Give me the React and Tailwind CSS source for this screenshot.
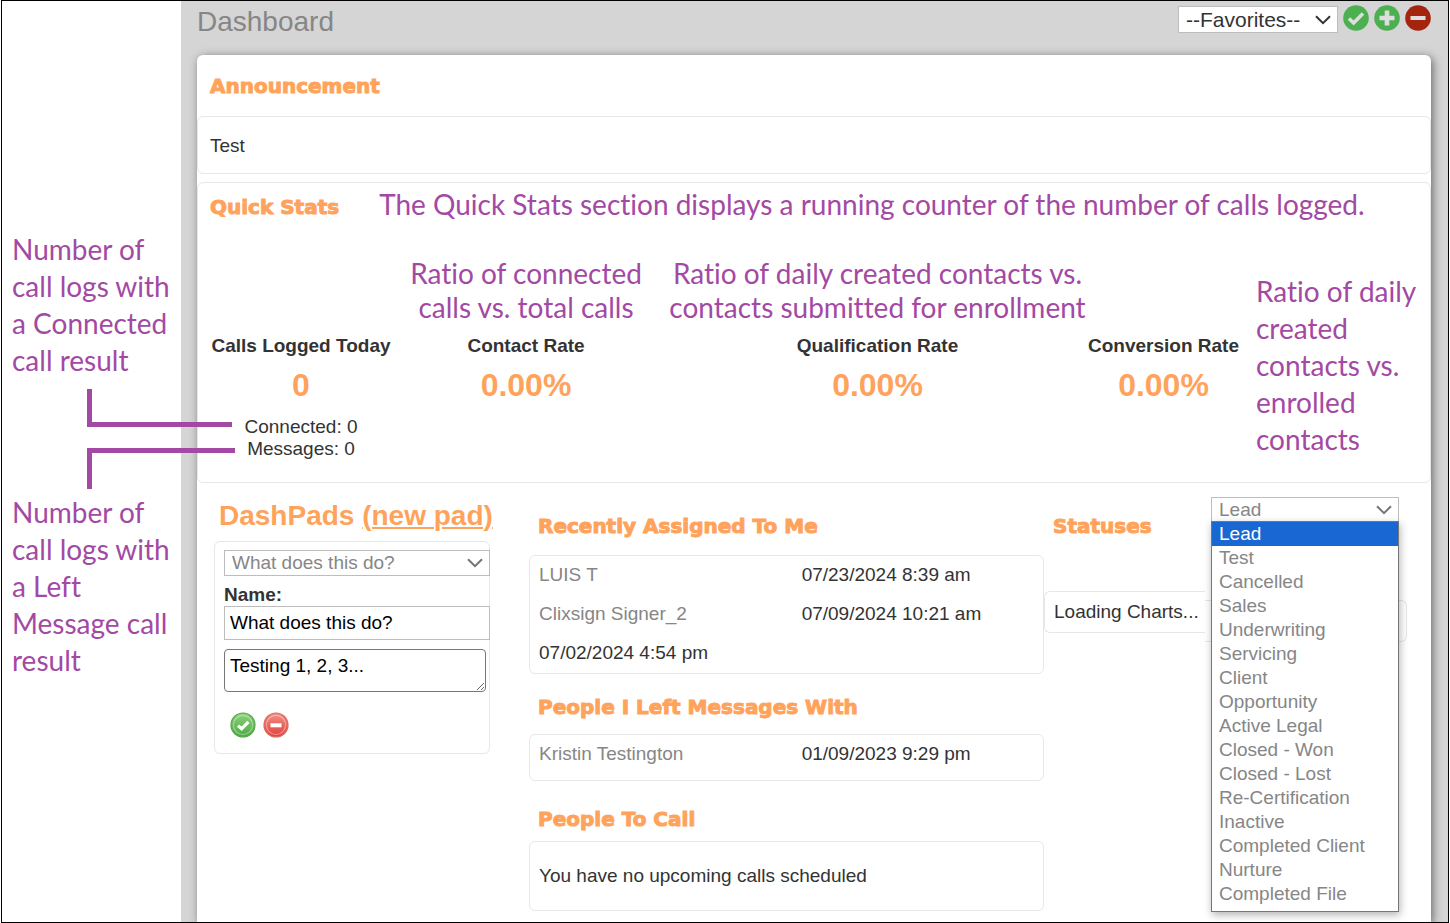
import React from "react";

const statuses = [
  "Lead",
  "Test",
  "Cancelled",
  "Sales",
  "Underwriting",
  "Servicing",
  "Client",
  "Opportunity",
  "Active Legal",
  "Closed - Won",
  "Closed - Lost",
  "Re-Certification",
  "Inactive",
  "Completed Client",
  "Nurture",
  "Completed File",
];

const note = "font-[Lato,sans-serif] text-[28px] text-[#a349a4] [font-variant-ligatures:none]";
const card = "rounded-md border border-[#e7e7e7]";

function Heading({ children }) {
  return (
    <h2 className="whitespace-nowrap font-['DejaVu_Sans',sans-serif] text-[20px] leading-6 font-bold text-[#ffa35c] [-webkit-text-stroke:1px_#ffa35c]">
      {children}
    </h2>
  );
}

function Select({ label, options, boxClass, textClass, chevronClass }) {
  return (
    <div className={`relative ${boxClass}`}>
      <select
        aria-label={label}
        className={`block h-full w-full appearance-none rounded-none border border-[#bdbdbd] bg-white pr-8 pl-[7px] ${textClass}`}
      >
        {options.map((o) => (
          <option key={o}>{o}</option>
        ))}
      </select>
      <svg
        viewBox="0 0 16 10"
        className={`pointer-events-none absolute top-1/2 right-[7px] h-[10px] w-4 -translate-y-1/2 ${chevronClass}`}
        fill="none"
        stroke="currentColor"
        strokeWidth="2"
      >
        <path d="M1 1.2l7 7 7-7" />
      </svg>
    </div>
  );
}

function FlatIcon({ label, fill, d, width }) {
  return (
    <button type="button" aria-label={label} className="size-[26px]">
      <svg viewBox="0 0 26 26" className="size-full">
        <circle cx="13" cy="13" r="12.8" fill={fill} />
        <path d={d} fill="none" stroke="#dedede" strokeWidth={width} />
      </svg>
    </button>
  );
}

function GlossIcon({ label, id, light, dark, rim, d, width }) {
  return (
    <button type="button" aria-label={label} className="size-[26px]">
      <svg viewBox="0 0 26 26" className="size-full">
        <defs>
          <linearGradient id={id} x1="0" y1="0" x2="0" y2="1">
            <stop offset="0" stopColor={light} />
            <stop offset="1" stopColor={dark} />
          </linearGradient>
        </defs>
        <circle cx="13" cy="13" r="12" fill={`url(#${id})`} stroke={rim} strokeWidth="1.2" />
        <circle cx="13" cy="13" r="9.6" fill="none" stroke="#fff" strokeOpacity="0.35" strokeWidth="1.2" />
        <path d={d} fill="none" stroke="#fff" strokeWidth={width} />
      </svg>
    </button>
  );
}

function Stat({ label, value, className = "", children }) {
  return (
    <div className={`pt-[11px] text-center whitespace-nowrap ${className}`}>
      <h3 className="leading-[22px] font-bold">{label}</h3>
      <p className="mt-[9px] mb-3 text-[32px] leading-[38px] font-bold text-[#ffa35c]">{value}</p>
      {children}
    </div>
  );
}

function PeopleTable({ rows, className = "" }) {
  return (
    <div className={`${card} ${className}`}>
      <table className="w-full table-fixed text-left">
        <colgroup>
          <col className="w-[51%]" />
          <col />
        </colgroup>
        <tbody>
          {rows.map(([name, date]) => (
            <tr key={name} className="h-[39px]">
              <td className="pl-[9px]">
                {date ? (
                  <a href="#contact" className="text-[#868686]">
                    {name}
                  </a>
                ) : (
                  name
                )}
              </td>
              <td className="pl-2.5">{date}</td>
            </tr>
          ))}
        </tbody>
      </table>
    </div>
  );
}

function SideNotes() {
  return (
    <aside className={`relative w-[179px] shrink-0 bg-white pt-[230px] pr-1 pl-2.5 leading-[37px] ${note}`}>
      <p>
        Number of
        <br />
        call logs with
        <br />a Connected
        <br />
        call result
      </p>
      <p className="mt-[115px]">
        Number of
        <br />
        call logs with
        <br />a Left
        <br />
        Message call
        <br />
        result
      </p>
      <svg
        className="pointer-events-none absolute top-[388px] left-[85px] z-10 h-[100px] w-[149px]"
        viewBox="0 0 149 100"
        fill="none"
        stroke="#a349a4"
        strokeWidth="5"
      >
        <path d="M2.5 0V35.500H145M2.500 100V61.500H148" />
      </svg>
    </aside>
  );
}

function QuickStats() {
  return (
    <section className={`mt-2 pb-[22px] ${card}`}>
      <div className="flex items-start gap-10 pt-1 pl-3">
        <div className="pt-2">
          <Heading>Quick Stats</Heading>
        </div>
        <p className={`leading-[34px] whitespace-nowrap ${note}`}>
          The Quick Stats section displays a running counter of the number of calls logged.
        </p>
      </div>
      <div className="mt-[35px] grid grid-cols-[206fr_244fr_439fr_153fr_190fr]">
        <p className={`col-start-2 text-center leading-[34px] whitespace-nowrap ${note}`}>
          Ratio of connected
          <br />
          calls vs. total calls
        </p>
        <p className={`flex justify-center pl-5 text-center leading-[34px] whitespace-nowrap ${note}`}>
          <span>
            Ratio of daily created contacts vs.
            <br />
            contacts submitted for enrollment
          </span>
        </p>
        <p className={`col-start-5 row-span-2 pt-[17px] pl-4 leading-[37px] ${note}`}>
          Ratio of daily created contacts vs. enrolled contacts
        </p>
        <Stat label="Calls Logged Today" value="0" className="col-start-1 row-start-2">
          <p className="leading-[22px]">Connected: 0</p>
          <p className="leading-[22px]">Messages: 0</p>
        </Stat>
        <Stat label="Contact Rate" value="0.00%" />
        <Stat label="Qualification Rate" value="0.00%" className="pl-5" />
        <Stat label="Conversion Rate" value="0.00%" />
      </div>
    </section>
  );
}

function DashPads() {
  return (
    <section className="pt-4">
      <h2 className="pl-[5px] text-[28px] leading-[34px] font-bold whitespace-nowrap text-[#ffa35c]">
        DashPads{" "}
        <a href="#new-pad" className="underline decoration-2 underline-offset-2">
          (new pad)
        </a>
      </h2>
      <form className={`mt-2 pt-2 pb-[15px] pl-[9px] ${card}`}>
        <div className="-mr-px">
          <Select
            label="Pad"
            options={["What does this do?"]}
            boxClass="h-[26px]"
            textClass="text-[19px] leading-[22px] text-[#868686]"
            chevronClass="text-[#757575]"
          />
          <label htmlFor="pad-name" className="mt-[7px] block leading-[23px] font-bold">
            Name:
          </label>
          <input
            id="pad-name"
            defaultValue="What does this do?"
            className="block h-[34px] w-full border border-[#bdbdbd] px-[5px] text-black"
          />
          <div className="pt-[9px] pr-1">
            <textarea
              aria-label="Pad text"
              defaultValue="Testing 1, 2, 3..."
              className="block h-[43px] w-full resize rounded border border-[#767676] px-[5px] py-1 leading-6 text-black"
            />
          </div>
        </div>
        <div className="mt-5 flex gap-[7px] pl-1.5">
          <GlossIcon
            label="Save pad"
            id="gloss-green"
            light="#8ed27c"
            dark="#4aa940"
            rim="#57a84c"
            d="M8 13.600l3.600 3.200 6.800-7"
            width="3.2"
          />
          <GlossIcon
            label="Delete pad"
            id="gloss-red"
            light="#f09186"
            dark="#e03f38"
            rim="#dd6a62"
            d="M7.500 13.300h11"
            width="4"
          />
        </div>
      </form>
    </section>
  );
}

function Statuses() {
  return (
    <section className="relative pt-[31px]">
      <div className="pl-[9px]">
        <Heading>Statuses</Heading>
      </div>
      <div className="mt-[53px] flex pr-6">
        <p className="h-[42px] rounded-l-md border border-r-0 border-[#e7e7e7] pr-1.5 pl-[9px] leading-10 whitespace-nowrap">
          Loading Charts...
        </p>
        <div className="mt-[9px] h-[42px] flex-1 rounded-r-md border border-l-0 border-[#e7e7e7]" />
      </div>
      <div className="absolute top-3.5 right-8 w-[188px]">
        <Select
          label="Status"
          options={statuses}
          boxClass="h-[25px]"
          textClass="text-[19px] leading-[22px] text-[#868686]"
          chevronClass="text-[#757575]"
        />
        <ul
          role="listbox"
          aria-label="Status options"
          className="relative -mt-px border border-[#767676] bg-white pb-[5px] text-[#868686] shadow-[1px_3px_8px_rgba(0,0,0,0.3)]"
        >
          {statuses.map((s, i) => (
            <li
              key={s}
              role="option"
              aria-selected={i === 0}
              className="pl-[7px] leading-6 aria-selected:bg-[#1967d2] aria-selected:text-white"
            >
              {s}
            </li>
          ))}
        </ul>
      </div>
    </section>
  );
}

export default function App() {
  return (
    <div className="flex min-h-screen bg-white pr-px pl-px font-['Liberation_Sans',Arial,sans-serif] text-[19px] text-[#333]">
      <div className="flex flex-1 border border-black">
        <SideNotes />
        <main className="flex min-w-0 flex-1 flex-col overflow-hidden bg-[#d5d5d5] pr-[17px] pl-4">
          <header className="flex h-[54px] items-start justify-between">
            <h1 className="pt-[5px] text-[28px] leading-8 text-[#868686]">Dashboard</h1>
            <div className="flex gap-[5px] pt-1">
              <Select
                label="Favorites"
                options={["--Favorites--"]}
                boxClass="mt-px h-[27px] w-40"
                textClass="text-[21px] leading-6"
                chevronClass="text-[#333]"
              />
              <FlatIcon label="Apply favorite" fill="#4caf50" d="M6 13.500l4.600 4.500L20 8.500" width="3.6" />
              <FlatIcon label="Add favorite" fill="#4caf50" d="M13 5.500v15M5.500 13h15" width="4.6" />
              <FlatIcon label="Remove favorite" fill="#a5240d" d="M5.500 13h15" width="4" />
            </div>
          </header>
          <div className="flex-1 rounded-t-md bg-white shadow-[2px_2px_10px_rgba(0,0,0,0.5)]">
            <section>
              <div className="px-[13px] pt-[19px] pb-[18px]">
                <Heading>Announcement</Heading>
              </div>
              <p className={`px-3 pt-[17px] pb-[15px] leading-6 ${card}`}>Test</p>
            </section>
            <QuickStats />
            <div className="grid grid-cols-[315px_515fr_387fr] pl-[17px]">
              <div className="pr-[39px]">
                <DashPads />
              </div>
              <div className="pt-[31px]">
                <div className="pb-[17px] pl-[9px]">
                  <Heading>Recently Assigned To Me</Heading>
                </div>
                <PeopleTable
                  rows={[
                    ["LUIS T", "07/23/2024 8:39 am"],
                    ["Clixsign Signer_2", "07/09/2024 10:21 am"],
                    ["07/02/2024 4:54 pm", ""],
                  ]}
                />
                <div className="pt-[21px] pb-[15px] pl-[9px]">
                  <Heading>People I Left Messages With</Heading>
                </div>
                <PeopleTable className="pb-1.5" rows={[["Kristin Testington", "01/09/2023 9:29 pm"]]} />
                <div className="pt-[26px] pb-2.5 pl-[9px]">
                  <Heading>People To Call</Heading>
                </div>
                <p className={`py-[22px] pl-[9px] leading-6 ${card}`}>You have no upcoming calls scheduled</p>
              </div>
              <Statuses />
            </div>
          </div>
        </main>
      </div>
    </div>
  );
}
